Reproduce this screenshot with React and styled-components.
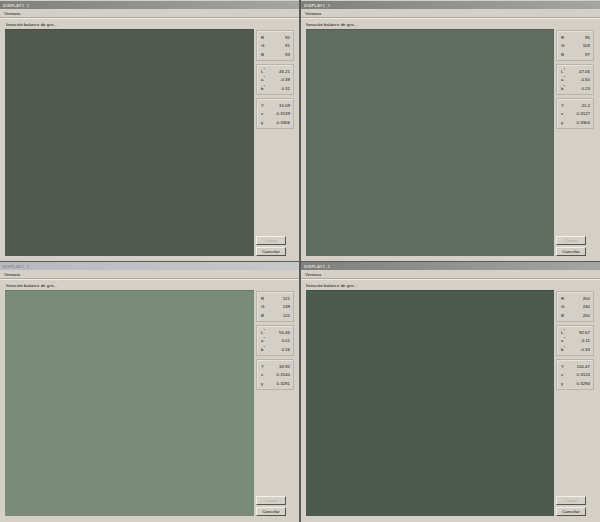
import React from "react";
import styled, { createGlobalStyle } from "styled-components";

const Global = createGlobalStyle`
  html, body { margin: 0; padding: 0; background: #d4d0c8; }
  body { width: 600px; height: 522px; overflow: hidden; font-family: "Liberation Sans", Arial, sans-serif; }
`;
const Grid = styled.div`
  width: 600px; height: 522px; display: grid;
  grid-template-columns: 300px 300px; grid-template-rows: 262px 260px;
  background: #d4d0c8;
`;
const Win = styled.section`
  display: flex; flex-direction: column; min-width: 0; min-height: 0; box-sizing: border-box;
  background: #d4d0c8; color: #111; font-size: 4.4px;
  padding-top: ${p => p.$row === 0 ? "1px" : "0"};
  border-right: ${p => p.$col === 0 ? "1px solid #5c5a55" : "0"};
  border-left: ${p => p.$col === 1 ? "1px solid #5c5a55" : "0"};
  border-bottom: ${p => p.$row === 0 ? "1px solid #5c5a55" : "0"};
`;
const TitleBar = styled.div`
  height: 8px; flex: none; padding-left: 3px; display: flex; align-items: center;
  background: ${p => p.$active ? "linear-gradient(90deg,#7f7f7b,#a5a5a1)" : "linear-gradient(90deg,#b6bac0,#c6c8ca)"};
  color: ${p => p.$active ? "#dcdcd8" : "#8f8f8f"}; font-size: 4.2px; font-weight: 700; letter-spacing: .15px;
`;
const MenuBar = styled.div`
  height: 9px; box-sizing: border-box; flex: none; padding-left: 4px; display: flex; align-items: center;
  border-bottom: 1px solid #aca8a0;
`;
const Body = styled.div`
  flex: 1; min-height: 0; display: flex; flex-direction: column;
  padding: 3px 0 ${p => p.$row === 0 ? "5px" : "6px"} 5px;
  border-top: 1px solid #eeebe4;
`;
const Caption = styled.div`
  height: 7px; flex: none; padding-left: ${p => p.$col === 0 ? "1px" : "0"}; display: flex; align-items: flex-start; line-height: 5px;
`;
const Content = styled.div`
  flex: 1; min-height: 0; display: flex; gap: 2px;
`;
const Canvas = styled.div`
  width: ${p => p.$col === 0 ? "249px" : "248px"}; flex: none; background: ${p => p.$color};
  border-top: 1px solid rgba(0, 0, 0, .12); box-sizing: border-box;
`;
const Side = styled.div`
  width: 38px; flex: none; display: flex; flex-direction: column; gap: 3px; padding-top: 1px;
`;
const Group = styled.div`
  height: 31px; box-sizing: border-box; display: flex; flex-direction: column; justify-content: center; gap: 3.5px;
  padding: 0 3px 0 4px; border: 1px solid #b8b4ac; box-shadow: inset 1px 1px 0 #e4e1da;
`;
const Row = styled.div`
  display: flex; justify-content: space-between; line-height: 5px; height: 5px;
  sup { font-size: 3.6px; line-height: 0; vertical-align: 1.6px; }
`;
const Buttons = styled.div`
  margin-top: auto; display: flex; flex-direction: column; gap: 2px;
`;
const Button = styled.div`
  width: 30px; height: 9px; box-sizing: border-box; display: flex; align-items: center; justify-content: center;
  background: #d4d0c8; font-size: 4.4px; color: ${p => p.$disabled ? "#a8a49d" : "#111"};
  border: 1px solid; border-color: #f2efe8 #55534e #55534e #f2efe8;
`;

const data = [
  { color: "#52594f", rgb: ["92", "91", "93"], lab: ["46.21", "-0.39", "0.31"], xyz: ["15.09", "0.3139", "0.3306"], active: true },
  { color: "#5f6d61", rgb: ["95", "109", "97"], lab: ["47.06", "-0.50", "0.23"], xyz: ["21.2", "0.3127", "0.3304"], active: true },
  { color: "#798c7b", rgb: ["121", "139", "122"], lab: ["55.46", "0.01", "0.16"], xyz: ["34.92", "0.3140", "0.3291"], active: false },
  { color: "#4d5a4f", rgb: ["200", "240", "200"], lab: ["92.67", "0.11", "-0.33"], xyz: ["100.47", "0.3124", "0.3294"], active: true },
];

const Values = ({ labels, values }) => (
  <Group>
    {labels.map((l, i) => (
      <Row key={i}><span>{l}</span><span>{values[i]}</span></Row>
    ))}
  </Group>
);

export default function App() {
  return (
    <Grid>
      <Global />
      {data.map((d, i) => {
        const col = i % 2;
        const row = i < 2 ? 0 : 1;
        return (
          <Win key={i} $col={col} $row={row}>
            <TitleBar $active={d.active}>DISPLAY1_1</TitleBar>
            <MenuBar>Ventana</MenuBar>
            <Body $row={row}>
              <Caption $col={col}>Iteración balance de gris...</Caption>
              <Content>
                <Canvas $col={col} $color={d.color} />
                <Side>
                  <Values labels={["R", "G", "B"]} values={d.rgb} />
                  <Values labels={[<>L<sup>*</sup></>, <>a<sup>*</sup></>, <>b<sup>*</sup></>]} values={d.lab} />
                  <Values labels={["Y", "x", "y"]} values={d.xyz} />
                  <Buttons>
                    <Button $disabled>Cerrar</Button>
                    <Button>Cancelar</Button>
                  </Buttons>
                </Side>
              </Content>
            </Body>
          </Win>
        );
      })}
    </Grid>
  );
}
